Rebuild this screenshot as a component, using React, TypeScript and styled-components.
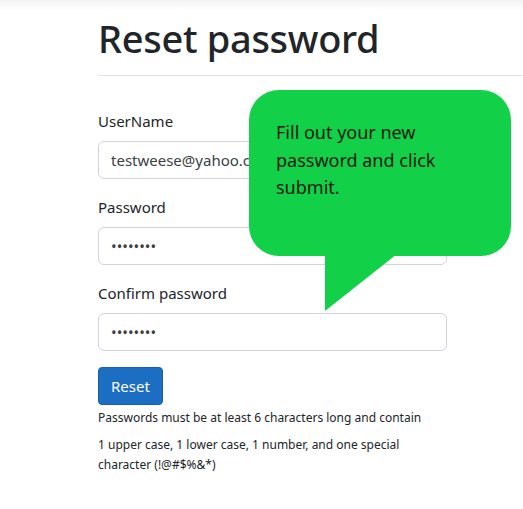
import React from "react";
import styled, { createGlobalStyle } from "styled-components";

const GlobalStyle = createGlobalStyle`
  html, body {
    margin: 0;
    padding: 0;
    background: #ffffff;
    font-family: "Noto Sans", "Open Sans", sans-serif;
    color: #212529;
  }
  * {
    box-sizing: border-box;
  }
`;

const Page = styled.div`
  position: relative;
  width: 523px;
  height: 509px;
  overflow: hidden;
`;

const TopShade = styled.div`
  height: 10px;
  background: linear-gradient(#f2f2f2, #ffffff);
`;

const Content = styled.main`
  padding-left: 98px;
`;

const Title = styled.h1`
  margin: 4px 0 0;
  font-size: 38px;
  font-weight: 500;
  line-height: 48px;
  letter-spacing: -0.3px;
  color: #212529;
`;

const Rule = styled.hr`
  margin: 13px 0 0;
  border: 0;
  border-top: 1px solid #e2e3e5;
`;

const Form = styled.form`
  width: 349px;
  padding-top: 33px;
`;

const Group = styled.div`
  margin-bottom: 16px;
`;

const Label = styled.label`
  display: block;
  margin-bottom: 8px;
  font-size: 15px;
  line-height: 24px;
  color: #212529;
`;

const Field = styled.input`
  display: block;
  width: 100%;
  height: 38px;
  padding: 6px 12px;
  font-family: inherit;
  font-size: 15px;
  color: #3a3f44;
  background: #ffffff;
  border: 1px solid #ced4da;
  border-radius: 6px;
  outline: none;
`;

const Button = styled.button`
  display: block;
  height: 38px;
  padding: 0 12px;
  font-family: inherit;
  font-size: 15px;
  color: #ffffff;
  background: #1b6ec2;
  border: 1px solid #1861ac;
  border-radius: 4px;
`;

const Hint = styled.p<{ $gap: number }>`
  margin: ${p => p.$gap}px 0 0;
  font-size: 12px;
  line-height: 20px;
  color: #212529;
`;

const Bubble = styled.div`
  position: absolute;
  left: 249px;
  top: 90px;
  width: 262px;
  height: 166px;
  padding: 29px 20px 0 27px;
  background: #12d048;
  border-radius: 30px;
  font-size: 18px;
  line-height: 27.5px;
  color: #0d1a10;

  &::after {
    content: "";
    position: absolute;
    left: 76px;
    top: 164px;
    width: 72px;
    height: 57px;
    background: #12d048;
    clip-path: polygon(0 0, 100% 0, 0 100%);
  }
`;

const BubbleText = styled.div`
  width: 175px;
`;

export default function App() {
  return (
    <Page>
      <GlobalStyle />
      <TopShade />
      <Content>
        <Title>Reset password</Title>
        <Rule />
        <Form onSubmit={e => e.preventDefault()}>
          <Group>
            <Label>UserName</Label>
            <Field type="text" defaultValue="testweese@yahoo.com" readOnly />
          </Group>
          <Group>
            <Label>Password</Label>
            <Field type="password" defaultValue="Test123!" readOnly />
          </Group>
          <Group>
            <Label>Confirm password</Label>
            <Field type="password" defaultValue="Test123!" readOnly />
          </Group>
          <Button type="submit">Reset</Button>
          <Hint $gap={3}>Passwords must be at least 6 characters long and contain</Hint>
          <Hint $gap={7}>1 upper case, 1 lower case, 1 number, and one special character (!@#$%&*)</Hint>
        </Form>
      </Content>
      <Bubble>
        <BubbleText>Fill out your new password and click submit.</BubbleText>
      </Bubble>
    </Page>
  );
}
